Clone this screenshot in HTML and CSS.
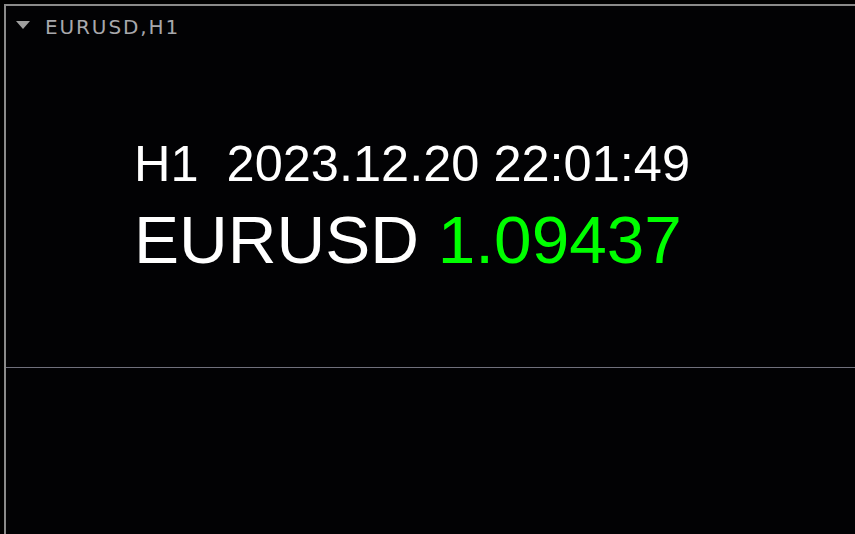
FILE: index.html
```html
<!DOCTYPE html>
<html lang="en">
<head>
  <meta charset="UTF-8">
  <meta name="viewport" content="width=device-width, initial-scale=1.0">
  <title>EURUSD,H1</title>
  <link rel="stylesheet" href="styles.css">
</head>
<body>
  <div class="chart">
    <!-- Main chart window -->
    <div class="pane main-pane">
      <div class="pane-title">
        <span class="arrow"></span>
        <span class="title-text">EURUSD,H1</span>
      </div>

      <!-- Info label drawn by the indicator -->
      <div class="info">
        <div class="info-time">H1&nbsp;&nbsp;2023.12.20 22:01:49</div>
        <div class="info-price">EURUSD <span class="price">1.09437</span></div>
      </div>
    </div>

    <!-- Sub window -->
    <div class="pane sub-pane"></div>
  </div>
</body>
</html>
```

FILE: styles.css
```css
html, body {
  margin: 0;
  padding: 0;
  background-color: #000000;
}

body {
  width: 855px;
  height: 534px;
  overflow: hidden;
  font-family: 'Liberation Sans', Arial, sans-serif;
}

.chart {
  box-sizing: border-box;
  margin: 4px 0 0 4px;
  height: 530px;
  border-top: 2px solid #8a8a8a;
  border-left: 2px solid #8a8a8a;
  display: flex;
  flex-direction: column;
  background-color: #020204;
}

.main-pane {
  height: 361px;
  border-bottom: 1px solid #70707c;
}

.sub-pane {
  flex: 1;
}

.pane-title {
  display: flex;
  align-items: flex-start;
  padding: 9px 0 0 10px;
  height: 24px;
  line-height: 24px;
}

.arrow {
  width: 0;
  height: 0;
  margin-top: 6px;
  margin-right: 15px;
  border-left: 7px solid transparent;
  border-right: 7px solid transparent;
  border-top: 8px solid #a0a0a0;
}

.title-text {
  font-family: 'DejaVu Sans', Tahoma, sans-serif;
  font-size: 20px;
  letter-spacing: 1.9px;
  color: #a8a8ac;
}

.info {
  margin-top: 100px;
  padding-left: 128px;
  color: #ffffff;
}

.info-time {
  font-size: 50.5px;
  line-height: 1;
}

.info-price {
  margin-top: 16px;
  font-size: 67.5px;
  line-height: 1;
}

.price {
  color: #00ff00;
}
```
